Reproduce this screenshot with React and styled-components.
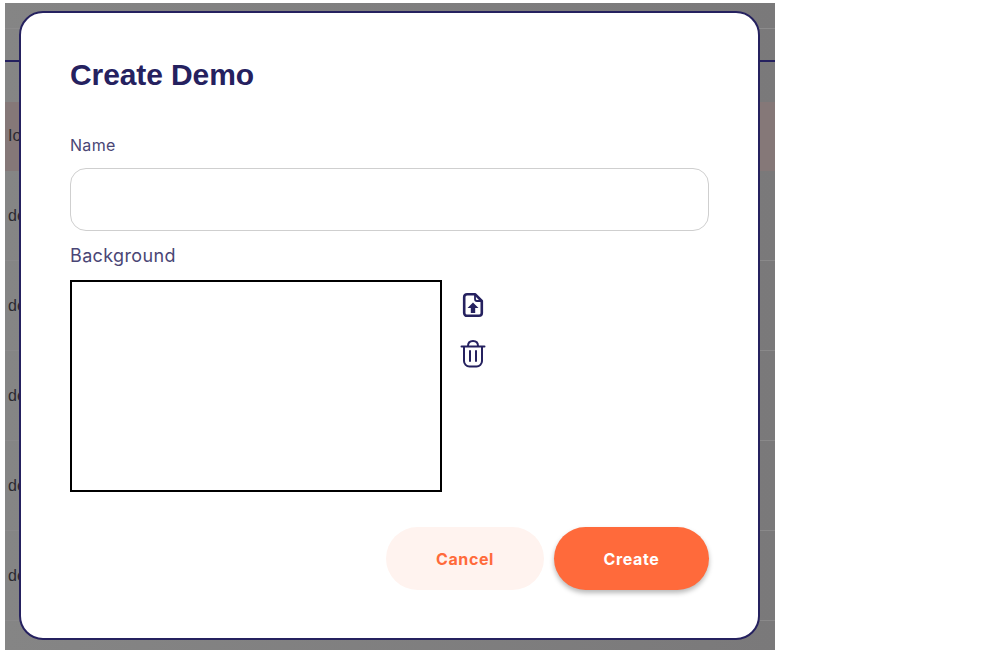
import React from "react";
import styled, { createGlobalStyle } from "styled-components";

const GlobalStyle = createGlobalStyle`
  html, body {
    margin: 0;
    padding: 0;
    background: #fff;
  }
  body {
    width: 998px;
    height: 656px;
    overflow: hidden;
    font-family: "Liberation Sans", Arial, sans-serif;
  }
`;

//styles
const Page = styled.div`
  position: relative;
  width: 770px;
  height: 647px;
  margin: 3px 0 0 5px;
  overflow: hidden;
  background: linear-gradient(90deg, #858585, #7a797a);
`;
const TopBar = styled.div`
  height: 25px;
  border-bottom: 1px solid #8c8b8c;
`;
const SubBar = styled.div`
  height: 31px;
  border-bottom: 2px solid #25215f;
`;
const Gap = styled.div`
  height: 40px;
`;
const Row = styled.div`
  display: flex;
  align-items: center;
  height: ${(props) => (props.$active ? "68px" : "89px")};
  padding: 0 3px;
  font-size: 16px;
  color: #2b2a30;
  background: ${(props) => (props.$active ? "#857878" : "transparent")};
  border-bottom: 1px solid ${(props) => (props.$active ? "transparent" : "#8a898a")};
`;
const Modal = styled.div`
  position: absolute;
  top: 8px;
  left: 14px;
  box-sizing: border-box;
  width: 741px;
  height: 629px;
  padding: 46px 50px 0 49px;
  background: #fff;
  border: 2px solid #25215f;
  border-radius: 24px;
`;
const Title = styled.h2`
  margin: 0 0 44px;
  font-size: 30px;
  line-height: 32px;
  font-weight: 700;
  letter-spacing: -0.1px;
  color: #25215f;
`;
const NameLabel = styled.label`
  display: block;
  margin-bottom: 13px;
  font-family: "Inter", sans-serif;
  font-size: 16px;
  line-height: 20px;
  letter-spacing: 0.3px;
  color: #4a4675;
`;
const NameInput = styled.input`
  display: block;
  box-sizing: border-box;
  width: 639px;
  height: 63px;
  margin-bottom: 13px;
  border: 1px solid #cfcfcf;
  border-radius: 16px;
  outline: none;
  background: #fff;
`;
const BackgroundLabel = styled.div`
  margin-bottom: 12px;
  font-family: "Inter", sans-serif;
  font-size: 18px;
  line-height: 24px;
  letter-spacing: 0.35px;
  color: #4a4675;
`;
const BackgroundRow = styled.div`
  display: flex;
  gap: 18px;
`;
const Canvas = styled.div`
  box-sizing: border-box;
  width: 372px;
  height: 212px;
  border: 2px solid #000;
  background: #fff;
`;
const Tools = styled.div`
  display: flex;
  flex-direction: column;
  gap: 21px;
  padding-top: 11px;
`;
const ToolButton = styled.button`
  display: block;
  width: 26px;
  height: 28px;
  padding: 0;
  border: 0;
  background: none;
  color: #25215f;
`;
const Actions = styled.div`
  display: flex;
  justify-content: flex-end;
  gap: 10px;
  width: 639px;
  margin-top: 35px;
`;
const ActionButton = styled.button`
  width: ${(props) => (props.$primary ? "155px" : "158px")};
  height: 63px;
  border: 0;
  border-radius: 32px;
  font-family: "Inter", sans-serif;
  font-size: 16px;
  font-weight: 700;
  letter-spacing: 0.6px;
  color: ${(props) => (props.$primary ? "#fff" : "#ff6a3b")};
  background: ${(props) => (props.$primary ? "#ff6a3b" : "#fff3ef")};
  box-shadow: ${(props) => (props.$primary ? "0 3px 5px rgba(0, 0, 0, 0.28)" : "none")};
`;

const UploadIcon = () => (
  <svg width="26" height="28" viewBox="0 0 26 28" fill="none">
    <path
      d="M7 3.200h8l6.800 6.800V22a2.800 2.800 0 0 1-2.800 2.800H7A2.800 2.800 0 0 1 4.200 22V6A2.800 2.800 0 0 1 7 3.200Z"
      stroke="currentColor"
      strokeWidth="2.600"
      strokeLinejoin="round"
    />
    <path d="M15 3.200V8a2 2 0 0 0 2 2h4.800" stroke="currentColor" strokeWidth="1.800" />
    <path d="M13 11.500l5.500 5.500h-3.300v5h-4.400v-5H7.500l5.500-5.500Z" fill="currentColor" />
  </svg>
);

const TrashIcon = () => (
  <svg width="26" height="28" viewBox="0 0 26 28" fill="none" stroke="currentColor" strokeWidth="2" strokeLinecap="round" strokeLinejoin="round">
    <path d="M1.500 6.500h23" />
    <path d="M8 6C8 2.500 10.500 1 13 1s5 1.500 5 5" />
    <path d="M4 7v14a5.500 5.500 0 0 0 5.500 5.500h7A5.500 5.500 0 0 0 22 21V7" />
    <path d="M10 11v10M16 11v10" />
  </svg>
);

const App = () => {
  return (
    <>
      <GlobalStyle />
      <Page>
        <TopBar />
        <SubBar />
        <Gap />
        <Row $active>Io</Row>
        <Row>de</Row>
        <Row>de</Row>
        <Row>de</Row>
        <Row>de</Row>
        <Row>de</Row>
        <Modal>
          <Title>Create Demo</Title>
          <NameLabel>Name</NameLabel>
          <NameInput />
          <BackgroundLabel>Background</BackgroundLabel>
          <BackgroundRow>
            <Canvas />
            <Tools>
              <ToolButton>
                <UploadIcon />
              </ToolButton>
              <ToolButton>
                <TrashIcon />
              </ToolButton>
            </Tools>
          </BackgroundRow>
          <Actions>
            <ActionButton>Cancel</ActionButton>
            <ActionButton $primary>Create</ActionButton>
          </Actions>
        </Modal>
      </Page>
    </>
  );
};

export default App;
